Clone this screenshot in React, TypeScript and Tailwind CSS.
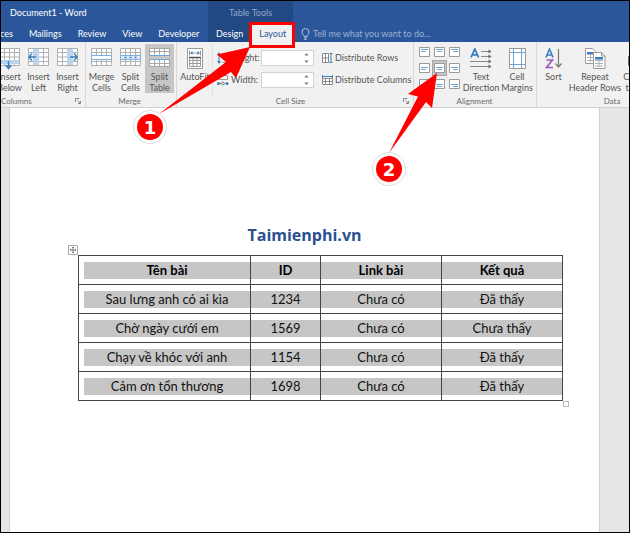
import clsx from "clsx";
import { ReactNode } from "react";

const rows = [
  ["Sau lưng anh có ai kìa", "1234", "Chưa có", "Đã thấy"],
  ["Chờ ngày cưới em", "1569", "Chưa có", "Chưa thấy"],
  ["Chạy về khóc với anh", "1154", "Chưa có", "Đã thấy"],
  ["Cảm ơn tổn thương", "1698", "Chưa có", "Đã thấy"],
];

const GRID = "#9a9a9a";
const BLUE = "#3d7fbf";

function GridLines() {
  return (
    <path
      d="M.5 .5h20v17H.5zM.5 4.5h20M.5 9h20M.5 13.5h20M5.5 .5v17M10.5 .5v17M15.5 .5v17"
      fill="#fff"
      stroke="#b0b0b0"
    />
  );
}

function InsertIcon({ side }: { side: "below" | "left" | "right" }) {
  return (
    <svg width="21" height="22" viewBox="0 0 21 22" fill="none">
      <GridLines />
      {side === "below" && (
        <>
          <path d="M1 12h19v4H1z" fill="#b9d3ee" />
          <path d="M9.5 13v7M6.5 17l3 3.5 3-3.5" stroke={BLUE} strokeWidth="1.5" />
        </>
      )}
      {side === "left" && (
        <>
          <path d="M5 1h6v16H5z" fill="#b9d3ee" />
          <path d="M8 9H1M4 5.5L.8 9 4 12.5" stroke={BLUE} strokeWidth="1.5" />
        </>
      )}
      {side === "right" && (
        <>
          <path d="M10 1h6v16h-6z" fill="#b9d3ee" />
          <path d="M13 9h7M17 5.5L20.2 9 17 12.5" stroke={BLUE} strokeWidth="1.5" />
        </>
      )}
    </svg>
  );
}

function MergeIcon() {
  return (
    <svg width="21" height="22" viewBox="0 0 21 22" fill="none">
      <GridLines />
      <path d="M.5 7.5h20v4H.5z" fill="#fff" stroke="#7fb0dd" />
    </svg>
  );
}

function SplitCellsIcon() {
  return (
    <svg width="21" height="22" viewBox="0 0 21 22" fill="none">
      <GridLines />
      <path d="M.5 7.5h20v4H.5z" fill="#dcebf8" stroke="#7fb0dd" />
      <path d="M4.5 9.5h2M9.5 9.5h2M14.5 9.5h2" stroke={BLUE} strokeWidth="1.6" />
    </svg>
  );
}

function SplitTableIcon() {
  return (
    <svg width="21" height="22" viewBox="0 0 21 22" fill="none">
      <path d="M.5 .5h20v7H.5zM.5 11.5h20v7H.5z" fill="#fff" />
      <path
        d="M.5 7V.5h20V7M.5 12v6.5h20V12M.5 3.5h20M.5 15.5h20M5.5 .5v6M10.5 .5v6M15.5 .5v6M5.5 12v6M10.5 12v6M15.5 12v6"
        stroke="#a6a6a6"
      />
      <path d="M0 7.5h21M0 11.5h21" stroke="#6ea5d8" />
    </svg>
  );
}

function AutoFitIcon() {
  return (
    <svg width="16" height="22" viewBox="0 0 16 22" fill="none">
      <path d="M.5 .5h15v20H.5z" fill="#fff" stroke={GRID} />
      <path d="M2.5 2.5v5M13.5 2.5v5M5 5h6" stroke="#999" />
      <path d="M3 5l2.5-2v4zM13 5l-2.500-2v4z" fill={BLUE} />
      <path d="M2.5 9.5h11v9h-11zM2.5 12.5h11M2.5 15.5h11M6 9.5v9M10 9.5v9" stroke={GRID} />
      <path d="M2 9.5h12" stroke="#555" strokeWidth="1.5" />
    </svg>
  );
}

function HeightIcon() {
  return (
    <svg width="12" height="12" viewBox="0 0 12 12" fill="none">
      <path d="M2 3v6" stroke={BLUE} />
      <path d="M0 3l2-3 2 3zM0 9l2 3 2-3z" fill={BLUE} />
      <path d="M5.5 1.5h6v9h-6M5.5 6h6" stroke={GRID} />
    </svg>
  );
}

function WidthIcon() {
  return (
    <svg width="12" height="12" viewBox="0 0 12 12" fill="none">
      <path d="M.5 1.5h10v4H.5" stroke={GRID} />
      <path d="M3 9.5h5" stroke="#777" />
      <circle cx="1.5" cy="9.5" r="1.5" fill={BLUE} />
      <circle cx="10" cy="9.5" r="1.5" fill={BLUE} />
      <circle cx="5.8" cy="9.5" r="1.3" fill="#fff" stroke="#777" />
    </svg>
  );
}

function DistributeRowsIcon() {
  return (
    <svg width="11" height="10" viewBox="0 0 11 10" fill="none">
      <path d="M.5 .5h6v9h-6zM.5 5h6M3.5 .5v9" stroke="#8a8a8a" fill="#fff" />
      <path d="M9 1v8M7.5 .5h3M7.5 9.5h3" stroke={BLUE} />
    </svg>
  );
}

function DistributeColumnsIcon() {
  return (
    <svg width="11" height="10" viewBox="0 0 11 10" fill="none">
      <path d="M.5 3.5h10v6H.5zM.5 6.5h10M3.5 3.5v6M7.5 3.5v6" stroke="#8a8a8a" fill="#fff" />
      <path d="M1 1.5h9M.5 0v3M10.5 0v3" stroke={BLUE} />
    </svg>
  );
}

// row and col run from 0 (top / left) to 2 (bottom / right)
function AlignIcon({ row, col }: { row: number; col: number }) {
  const y = [2.5, 4.5, 5.5][row];
  return (
    <svg width="11" height="10" viewBox="0 0 11 10" fill="none">
      <path d="M.5 .5h10v9H.5z" fill="#fff" stroke={GRID} />
      <path d={`M2 ${y}h7`} stroke="#6ea5d8" />
      <path d={`M${[2, 3, 4][col]} ${y + 2}h5`} stroke="#6ea5d8" />
    </svg>
  );
}

function TextDirectionIcon() {
  return (
    <svg width="22" height="22" viewBox="0 0 22 22" fill="none">
      <path d="M1 9.5L4.8 1 8.6 9.5M2.4 6.8h4.800" stroke={BLUE} strokeWidth="1.8" />
      <path d="M11 3.5h9M11 8.5h9M0 13.5h20M0 18.5h20" stroke="#888" />
      <path
        d="M18.5 1.5l3 2-3 2zM18.5 6.5l3 2-3 2zM18.5 11.5l3 2-3 2zM18.5 16.5l3 2-3 2z"
        fill="#666"
      />
    </svg>
  );
}

function CellMarginsIcon() {
  return (
    <svg width="17" height="22" viewBox="0 0 17 22" fill="none">
      <path d="M.5 .5h16v20H.5z" fill="#fff" stroke={GRID} />
      <path d="M4.5 1v19M12.5 1v19M1 4.5h15M1 16.5h15" stroke="#6ea5d8" />
    </svg>
  );
}

function SortIcon() {
  return (
    <svg width="17" height="22" viewBox="0 0 17 22" fill="none">
      <path d="M1 9.5L4.5 1 8 9.5M2.2 7h4.6" stroke={BLUE} strokeWidth="1.6" />
      <path d="M1.5 12h6L1.5 19.5h6.5" stroke="#9a55bd" strokeWidth="1.6" />
      <path d="M13.5 1v18M10.5 15.5l3 3.500 3-3.500" stroke="#777" strokeWidth="1.2" />
    </svg>
  );
}

function RepeatHeaderIcon() {
  return (
    <svg width="21" height="22" viewBox="0 0 21 22" fill="none">
      <path d="M.5 .5h7l3 3v12H.5z" fill="#fff" stroke={GRID} />
      <path d="M2 6.500h7M2 9.5h7M2 12.5h7M5.5 5v9" stroke="#b0b0b0" />
      <path d="M2 4h7v2H2z" fill={BLUE} />
      <path d="M8.5 4.5h8l3.500 3.500v12.500H8.500z" fill="#fff" stroke={GRID} />
      <path d="M16.5 4.5V8H20" stroke={GRID} />
      <path d="M10 12.5h8M10 15.5h8M10 18h8M14 10v9" stroke="#b0b0b0" />
      <path d="M10 9h8v2.5h-8z" fill={BLUE} />
    </svg>
  );
}

function ConvertIcon() {
  return (
    <svg width="22" height="22" viewBox="0 0 22 22" fill="none">
      <path
        d="M.5 8.5h12v9H.5zM.5 11.5h12M.5 14.5h12M4.5 8.5v9M8.5 8.5v9"
        fill="#fff"
        stroke="#666"
      />
      <path d="M14 3.5h7M14 6.5h7M14 9.5h7" stroke={BLUE} />
    </svg>
  );
}

function LauncherIcon() {
  return (
    <svg width="6" height="6" viewBox="0 0 6 6" fill="none">
      <path d="M.5 4V.5H4M2.5 2.5l3 3M5.500 3v2.500H3" stroke="#888" />
    </svg>
  );
}

function Tab({ children, className = "text-white" }: { children: ReactNode; className?: string }) {
  return (
    <button type="button" className={clsx("h-full px-2 whitespace-nowrap", className)}>
      {children}
    </button>
  );
}

function Group({
  label,
  launcher,
  className,
  labelClassName = "text-center",
  children,
}: {
  label: string;
  launcher?: boolean;
  className?: string;
  labelClassName?: string;
  children: ReactNode;
}) {
  return (
    <section
      aria-label={label}
      className={clsx("flex shrink-0 flex-col border-r border-[#d8d8d8] pt-[2px]", className)}
    >
      <div className="flex flex-1">{children}</div>
      <div className="flex h-3 items-center pr-1 text-[8px] text-[#6a6a6a]">
        <span className={clsx("flex-1", labelClassName)}>{label}</span>
        {launcher && (
          <button type="button" aria-label={`${label} settings`}>
            <LauncherIcon />
          </button>
        )}
      </div>
    </section>
  );
}

function Tool({
  icon,
  lines,
  className = "w-[29px]",
}: {
  icon: ReactNode;
  lines: string[];
  className?: string;
}) {
  return (
    <button
      type="button"
      className={clsx("flex h-[49px] shrink-0 flex-col items-center pt-1 leading-[11px]", className)}
    >
      <span className="h-[23px]">{icon}</span>
      {lines.map((line) => (
        <span key={line} className="whitespace-nowrap">
          {line}
        </span>
      ))}
    </button>
  );
}

function SizeField({ id, label, icon }: { id: string; label: string; icon: ReactNode }) {
  return (
    <div className="flex h-4 items-center">
      <span className="w-[14px]">{icon}</span>
      <label htmlFor={id} className="w-[30px]">
        {label}
      </label>
      <div className="flex h-4 w-[53px] items-center border border-[#d4d4d4] bg-white pr-1">
        <input id={id} className="h-full w-0 flex-1 px-1 outline-none" />
        <svg width="5" height="10" viewBox="0 0 5 10" fill="#777">
          <path d="M.5 2.5L2.5 0l2 2.500zM.5 7.5l2 2.500 2-2.500z" />
        </svg>
      </div>
    </div>
  );
}

function Step({ number, className }: { number: number; className: string }) {
  return (
    <div
      className={clsx(
        "absolute flex size-[34px] items-center justify-center rounded-full border border-[#ddd] bg-white",
        className
      )}
    >
      <span className="flex size-[26px] items-center justify-center rounded-full bg-[#fe0000] font-['DejaVu_Sans',sans-serif] text-[18px] font-bold text-white">
        {number}
      </span>
    </div>
  );
}

export default function App() {
  return (
    <div className="relative flex min-h-screen flex-col overflow-hidden border border-black bg-[#e6e6e6] font-['Lato',sans-serif] text-[9px] text-[#555]">
      <header className="flex h-[41px] bg-[#2b579a]">
        <div className="flex w-[207px] flex-col overflow-hidden">
          <div className="h-6 pl-[9px] leading-6 text-white">Document1 - Word</div>
          <nav className="-ml-[9px] flex flex-1">
            <Tab>ces</Tab>
            <Tab>Mailings</Tab>
            <Tab>Review</Tab>
            <Tab>View</Tab>
            <Tab>Developer</Tab>
          </nav>
        </div>
        <div className="flex w-[85px] flex-col bg-[#234984]">
          <div className="h-6 text-center leading-6 text-[#91a7ca]">Table Tools</div>
          <nav className="flex flex-1">
            <Tab>Design</Tab>
            <Tab className="flex-1 bg-[#f1f1f1] text-[#2b579a]">Layout</Tab>
          </nav>
        </div>
        <div className="flex flex-1 items-end pl-2">
          <label className="flex h-[17px] w-full items-center gap-[3px]">
            <svg width="9" height="12" viewBox="0 0 9 12" fill="none" stroke="#b4c3de">
              <path d="M3 8.5C3 7 1 6 1 4a3.5 3.5 0 0 1 7 0c0 2-2 3-2 4.5zM3 10h3M3.5 11.5h2" />
            </svg>
            <input
              aria-label="Tell me what you want to do"
              placeholder="Tell me what you want to do..."
              className="w-full flex-1 bg-transparent outline-none placeholder:text-[#9db1d3]"
            />
          </label>
        </div>
      </header>

      <div className="flex h-[66px] overflow-hidden border-b border-[#d2d2d2] bg-[#f1f1f1]">
        <Group label="Columns" launcher className="-ml-[6px] w-[91px]" labelClassName="pl-[6px]">
          <Tool icon={<InsertIcon side="below" />} lines={["Insert", "Below"]} />
          <Tool icon={<InsertIcon side="left" />} lines={["Insert", "Left"]} />
          <Tool icon={<InsertIcon side="right" />} lines={["Insert", "Right"]} />
        </Group>
        <Group label="Merge" className="w-[91px] pl-px">
          <Tool icon={<MergeIcon />} lines={["Merge", "Cells"]} />
          <Tool icon={<SplitCellsIcon />} lines={["Split", "Cells"]} />
          <Tool icon={<SplitTableIcon />} lines={["Split", "Table"]} className="w-[29px] bg-[#c6c6c6]" />
        </Group>
        <Group label="Cell Size" launcher className="w-[237px] pl-px">
          <Tool icon={<AutoFitIcon />} lines={["AutoFit"]} className="w-[34px]" />
          <div className="flex flex-col gap-[6px] border-l border-[#e2e2e2] pt-[6px] pl-1">
            <SizeField id="height" label="Height:" icon={<HeightIcon />} />
            <SizeField id="width" label="Width:" icon={<WidthIcon />} />
          </div>
          <div className="flex flex-col gap-[6px] pt-[6px] pl-2 whitespace-nowrap">
            <button type="button" className="flex h-4 items-center gap-[2px]">
              <DistributeRowsIcon />
              Distribute Rows
            </button>
            <button type="button" className="flex h-4 items-center gap-[2px]">
              <DistributeColumnsIcon />
              Distribute Columns
            </button>
          </div>
        </Group>
        <Group label="Alignment" className="w-[123px] pl-[3px]">
          <div className="grid h-12 grid-cols-[15px_15px_15px] grid-rows-3">
            {[0, 1, 2].map((row) =>
              [0, 1, 2].map((col) => (
                <button
                  key={`${row}${col}`}
                  type="button"
                  aria-label={`Align ${["top", "middle", "bottom"][row]} ${["left", "center", "right"][col]}`}
                  className={clsx(
                    "flex items-center justify-center",
                    row === 1 && col === 1 && "border border-[#a5a5a5] bg-[#c6c6c6]"
                  )}
                >
                  <AlignIcon row={row} col={col} />
                </button>
              ))
            )}
          </div>
          <Tool icon={<TextDirectionIcon />} lines={["Text", "Direction"]} className="w-[38px]" />
          <Tool icon={<CellMarginsIcon />} lines={["Cell", "Margins"]} className="w-[34px]" />
        </Group>
        <Group label="Data" className="w-[153px] pl-[2px]">
          <Tool icon={<SortIcon />} lines={["Sort"]} />
          <Tool icon={<RepeatHeaderIcon />} lines={["Repeat", "Header Rows"]} className="w-[54px]" />
          <Tool icon={<ConvertIcon />} lines={["Convert", "to Text"]} className="w-[34px]" />
        </Group>
      </div>

      <main className="mr-[29px] ml-2 flex-1 border-x border-[#d0d0d0] bg-white pt-[115px] text-black">
        <h1 className="mb-2 text-center font-['Open_Sans',sans-serif] text-[16px] leading-6 font-bold text-[#2b4f93]">
          Taimienphi.vn
        </h1>
        <div className="relative mr-9 ml-[68px]">
          <svg
            className="absolute -top-[10px] -left-[10px]"
            width="10"
            height="10"
            viewBox="0 0 10 10"
            fill="none"
          >
            <path d="M.5 .5h9v9h-9z" fill="#fff" stroke="#aaa" />
            <path
              d="M5 2v6M2 5h6M4 3l1-1 1 1M4 7l1 1 1-1M3 4L2 5l1 1M7 4l1 1-1 1"
              stroke="#666"
              strokeWidth=".8"
            />
          </svg>
          <table className="w-full table-fixed border-collapse text-center text-[13px] leading-[17px]">
            <thead>
              <tr className="h-[29px]">
                {["Tên bài", "ID", "Link bài", "Kết quả"].map((name, i) => (
                  <th
                    key={name}
                    className={clsx(
                      "border border-[#444] p-0 font-bold",
                      i === 0 && "w-[172px] pl-[5px]",
                      i === 1 && "w-[70px]"
                    )}
                  >
                    <div className="bg-[#c6c6c6]">{name}</div>
                  </th>
                ))}
              </tr>
            </thead>
            <tbody>
              {rows.map((row) => (
                <tr key={row[0]} className="h-[29px]">
                  {row.map((cell, i) => (
                    <td
                      key={i}
                      className={clsx("border border-[#444] p-0 text-[#111]", i === 0 && "pl-[5px]")}
                    >
                      <div className="bg-[#c6c6c6]">{cell}</div>
                    </td>
                  ))}
                </tr>
              ))}
            </tbody>
          </table>
          <div className="absolute top-full left-full size-[6px] border border-[#bbb] bg-white" />
        </div>
      </main>

      {/* step callouts */}
      <div className="absolute top-[21px] left-[248px] h-[26px] w-[46px] border-3 border-[#fe0000]" />
      <svg
        className="pointer-events-none absolute top-0 left-0"
        width="460"
        height="180"
        viewBox="1 1 460 180"
        fill="#fe0000"
      >
        <path d="M250 47L217 54.5L226 62L159 114L231 72L236 78z" />
        <path d="M437 73L408 94L418 96.5L389 153L426 102L432 108z" />
      </svg>
      <Step number={1} className="top-[109px] left-[132px]" />
      <Step number={2} className="top-[151px] left-[371px]" />
    </div>
  );
}
